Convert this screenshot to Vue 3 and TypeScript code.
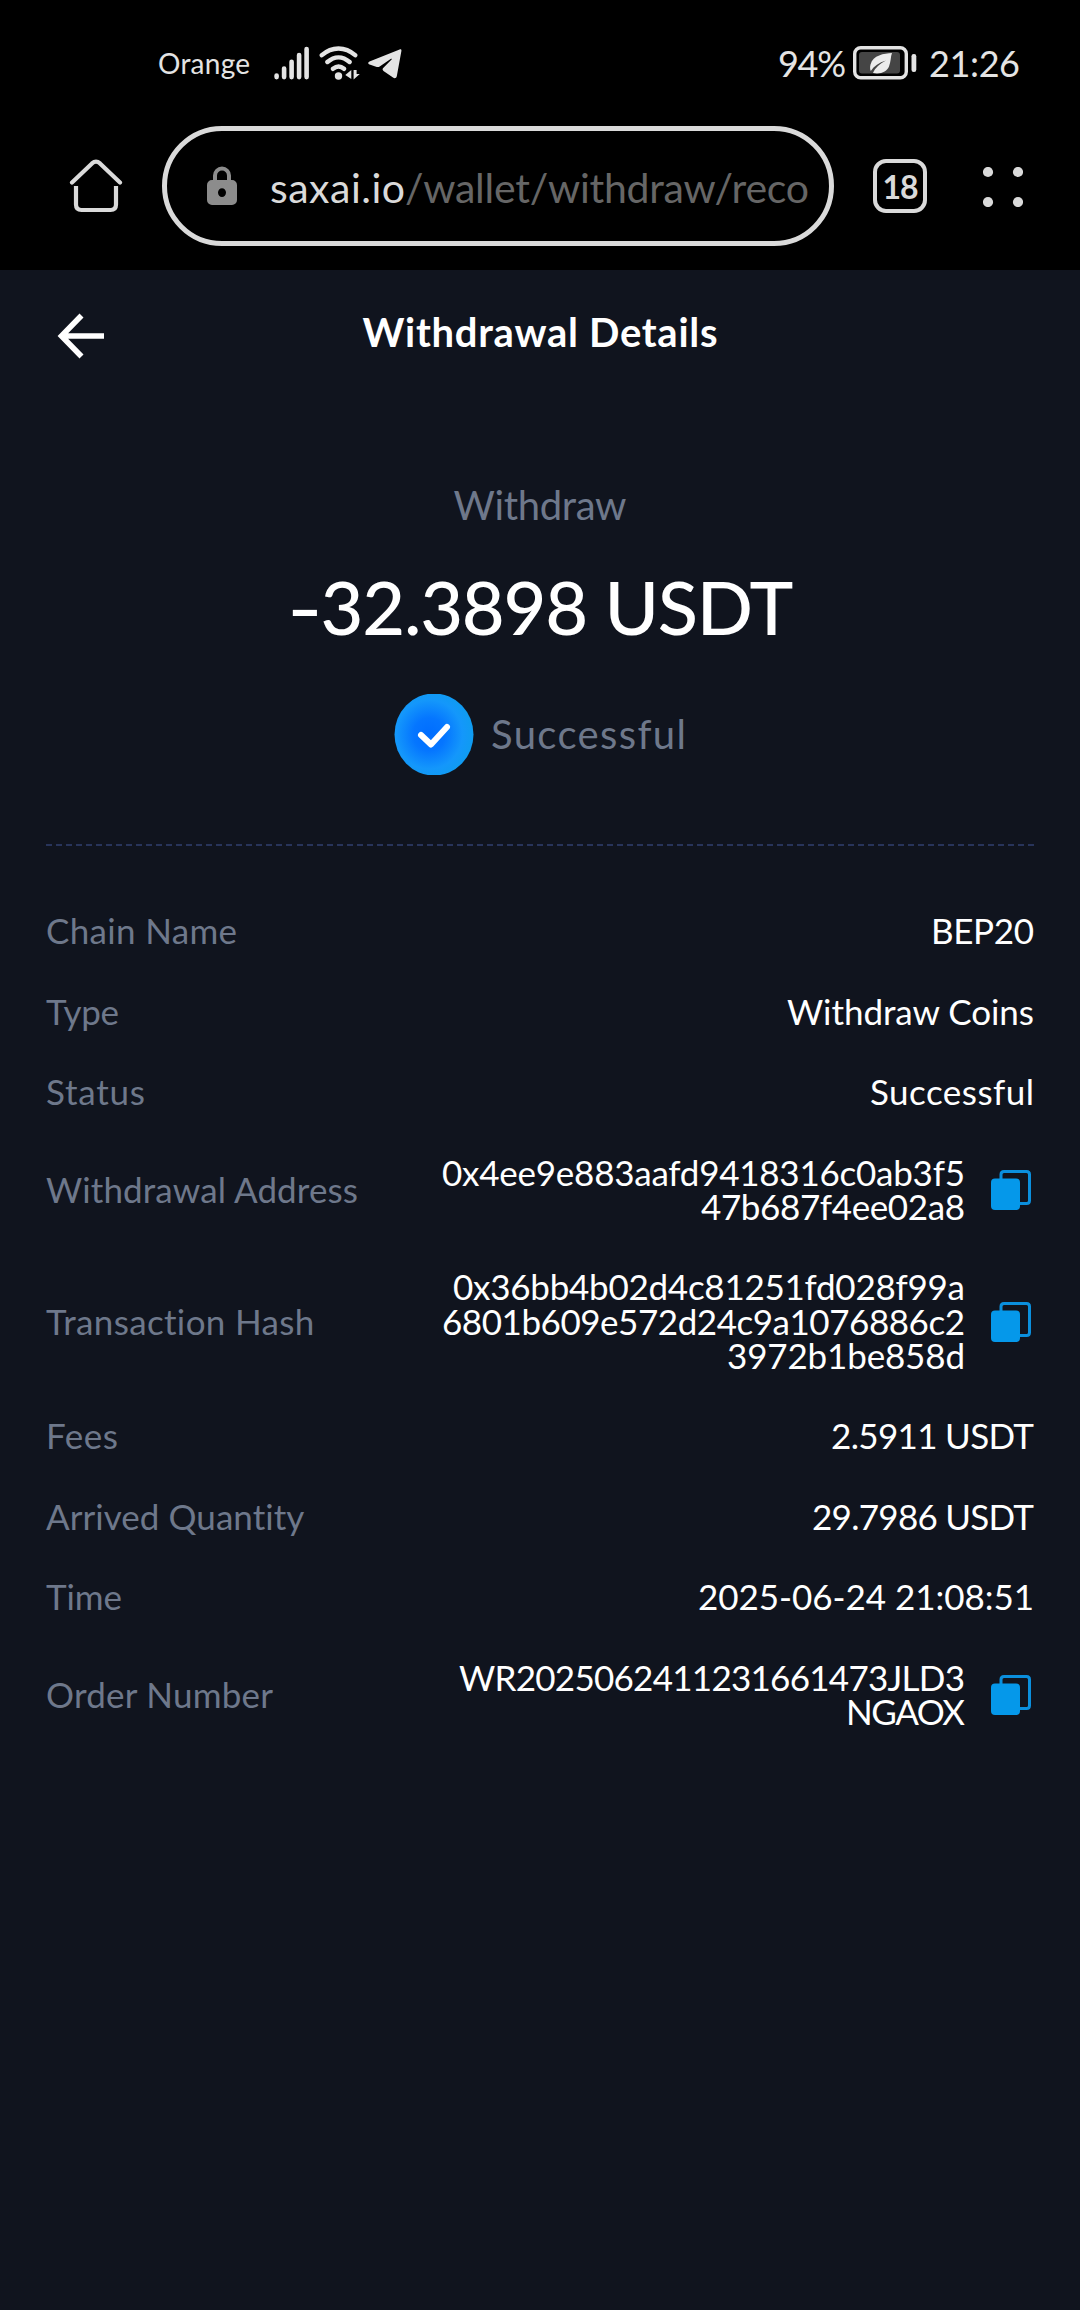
<script setup lang="ts">
interface DetailLine {
  text: string
  width: number
}

interface DetailRow {
  label: string
  labelWidth: number
  lines: DetailLine[]
  copyable?: boolean
}

const rows: DetailRow[] = [
  { label: 'Chain Name', labelWidth: 191, lines: [{ text: 'BEP20', width: 103 }] },
  { label: 'Type', labelWidth: 73, lines: [{ text: 'Withdraw Coins', width: 247 }] },
  { label: 'Status', labelWidth: 99, lines: [{ text: 'Successful', width: 164 }] },
  {
    label: 'Withdrawal Address',
    labelWidth: 312,
    lines: [
      { text: '0x4ee9e883aafd9418316c0ab3f5', width: 523 },
      { text: '47b687f4ee02a8', width: 264 },
    ],
    copyable: true,
  },
  {
    label: 'Transaction Hash',
    labelWidth: 269,
    lines: [
      { text: '0x36bb4b02d4c81251fd028f99a', width: 512 },
      { text: '6801b609e572d24c9a1076886c2', width: 523 },
      { text: '3972b1be858d', width: 238 },
    ],
    copyable: true,
  },
  { label: 'Fees', labelWidth: 72, lines: [{ text: '2.5911 USDT', width: 203 }] },
  { label: 'Arrived Quantity', labelWidth: 259, lines: [{ text: '29.7986 USDT', width: 222 }] },
  { label: 'Time', labelWidth: 76, lines: [{ text: '2025-06-24 21:08:51', width: 336 }] },
  {
    label: 'Order Number',
    labelWidth: 227,
    lines: [
      { text: 'WR2025062411231661473JLD3', width: 506 },
      { text: 'NGAOX', width: 119 },
    ],
    copyable: true,
  },
]

// Spreads the letters of a single-line text so that it takes the given width.
const vFit = {
  mounted(el: HTMLElement, binding: { value: number }) {
    const natural = el.getBoundingClientRect().width
    const count = (el.textContent ?? '').length
    const spacing = (binding.value - natural) / Math.max(1, count - 1)
    el.style.letterSpacing = `${spacing}px`
    el.style.marginRight = `${-spacing}px`
  },
}
</script>

<template>
  <div class="screen">
    <div class="chrome">
      <div class="status-bar">
        <span v-fit="92" class="carrier">Orange</span>
        <svg class="signal" width="36" height="34" viewBox="0 0 36 34" stroke="#e4e4e4" stroke-width="4.6" stroke-linecap="round">
          <path d="M2.6 29.5v1.6M10.1 22.6v8.5M17.6 15.8v15.3M25.1 9v22.1M32.6 3v28.1" />
        </svg>
        <svg class="wifi" width="43" height="34" viewBox="0 0 43 34" fill="none" stroke="#e4e4e4" stroke-width="4.4" stroke-linecap="round">
          <path d="M2.8 9.2C13 .2 26 .2 36.2 9.2M8.4 16C15.4 9.8 23.6 9.8 30.6 16M14 22.8c3.8-3 7.4-3 11 0" />
          <circle cx="19.5" cy="30" r="3.7" fill="#e4e4e4" stroke="none" />
          <path d="M32.3 24v9l-6-4zM34.6 24v9.5l6.2-5.5h-3.2V24z" fill="#e4e4e4" stroke="none" />
        </svg>
        <svg class="telegram" width="34" height="30" viewBox="0 0 34 30" fill="#e4e4e4">
          <path d="M31.6.4 1.5 12.5c-1.800.8-1.700 2.300.1 2.900l7.200 2.500c1 .3 2 .1 2.900-.5L23 9.800c.7-.4 1.100.1.6.6l-8.400 8.600c-1 1-.8 2.100.3 2.900l9.500 6.700c1.600 1 3.400.7 3.800-1.300L33.400 1.900c.2-1.300-.5-2-1.800-1.500z" />
        </svg>
        <span v-fit="68" class="clock percent">94%</span>
        <svg class="battery" width="64" height="34" viewBox="0 0 64 34">
          <rect x="1.700" y="1.700" width="51.600" height="30" rx="6" fill="none" stroke="#e4e4e4" stroke-width="3.400" />
          <rect x="6" y="6" width="41" height="21.500" rx="3" fill="#454545" />
          <path d="M39 7C31 7.500 20 9 17.500 18.500c-.7 2.800-.4 4.800.3 6.500C21 20 26 16.500 33 14.500 27 17.500 22 22 20 27c8 1.500 14-1.500 16-6.500C38 15.500 37.500 11 39 7z" fill="#ececec" />
          <rect x="58.500" y="8" width="4.800" height="18" rx="2.200" fill="#e4e4e4" />
        </svg>
        <span v-fit="91" class="clock">21:26</span>
      </div>

      <div class="toolbar">
        <svg class="home" width="54" height="54" viewBox="0 0 54 54" fill="none" stroke="#dadada" stroke-width="4.200" stroke-linecap="round" stroke-linejoin="round">
          <path d="M3 23.500 23 4.400q4-3.600 8 0L51 23.500" />
          <path d="M7 27v18.500q0 5.500 5.500 5.500h29q5.500 0 5.500-5.500V27" stroke-linecap="butt" />
        </svg>
        <div class="address-bar">
          <svg class="lock" width="30" height="40" viewBox="0 0 30 40">
            <path d="M8 16V9.500a7 7 0 0 1 14 0V16" fill="none" stroke="#8c8c8c" stroke-width="4" />
            <path fill="#8c8c8c" fill-rule="evenodd" d="M5 14h20a5 5 0 0 1 5 5v15a5 5 0 0 1-5 5H5a5 5 0 0 1-5-5V19a5 5 0 0 1 5-5zm10 8.200a4 4.400 0 1 0 0 8.800 4 4.400 0 0 0 0-8.800z" />
          </svg>
          <span v-fit="135" class="url host">saxai.io</span>
          <span v-fit="404" class="url path">/wallet/withdraw/reco</span>
        </div>
        <div class="tabs"><span>18</span></div>
        <svg class="menu" width="40" height="40" viewBox="0 0 40 40" fill="#dadada">
          <circle cx="5" cy="5" r="5.100" /><circle cx="35" cy="5" r="5.100" />
          <circle cx="5" cy="35" r="5.100" /><circle cx="35" cy="35" r="5.100" />
        </svg>
      </div>
    </div>

    <header class="header">
      <svg class="back" width="48" height="46" viewBox="0 0 48 46" fill="none" stroke="#fff" stroke-width="5.600">
        <path d="M24.500 2.500 4.500 23l20 20.500M5 23h42" />
      </svg>
      <h1><span v-fit="355">Withdrawal Details</span></h1>
    </header>

    <section class="summary">
      <p class="kind"><span v-fit="173">Withdraw</span></p>
      <p class="amount"><span class="minus">-</span><span v-fit="473">32.3898 USDT</span></p>
      <div class="result">
        <svg width="80" height="81" viewBox="0 0 80 81">
          <defs>
            <radialGradient id="badge" cx=".44" cy=".5" r=".56">
              <stop offset="0" stop-color="#006dff" />
              <stop offset=".36" stop-color="#0576ff" />
              <stop offset=".75" stop-color="#1497fb" />
              <stop offset="1" stop-color="#0f9cf0" />
            </radialGradient>
          </defs>
          <ellipse cx="40" cy="40.500" rx="39.500" ry="41" fill="url(#badge)" />
          <path d="M27 41 37 50.500 53 33" fill="none" stroke="#fff" stroke-width="6" stroke-linecap="round" stroke-linejoin="round" />
        </svg>
        <span v-fit="195">Successful</span>
      </div>
    </section>

    <div class="divider"></div>

    <dl class="details">
      <div v-for="row in rows" :key="row.label" class="row">
        <dt><span v-fit="row.labelWidth">{{ row.label }}</span></dt>
        <dd>
          <div class="value">
            <span v-for="line in row.lines" :key="line.text" v-fit="line.width">{{ line.text }}</span>
          </div>
          <svg v-if="row.copyable" class="copy" width="43" height="40" viewBox="0 0 43 40">
            <path d="M10 10V4.500q0-3 3-3h22.500q3 0 3 3v26q0 3-3 3H27" fill="none" stroke="#0b8fdd" stroke-width="3" />
            <rect x="0" y="8.500" width="29" height="31.500" rx="4" fill="#0598ea" />
          </svg>
        </dd>
      </div>
    </dl>
  </div>
</template>

<style>
body {
  margin: 0;
  background: #10141e;
}
</style>

<style scoped>
.screen {
  width: 1080px;
  min-height: 2310px;
  background: #10141e;
  color: #fff;
  font-family: Lato, "Noto Sans", sans-serif;
}

.screen span {
  display: inline-block;
  white-space: nowrap;
}

.chrome {
  box-sizing: border-box;
  height: 270px;
  background: #000;
}

.status-bar {
  display: flex;
  align-items: center;
  height: 125px;
  padding: 0 60px 0 158px;
  color: #e4e4e4;
}

.carrier {
  font-size: 28px;
}

.signal {
  margin-left: 24px;
}

.wifi {
  margin-left: 9px;
}

.telegram {
  margin: 2px 0 0 6px;
}

.clock {
  padding-top: 1px;
  font-size: 36px;
}

.percent {
  margin-left: auto;
}

.battery {
  margin: 0 12px 0 7px;
}

.toolbar {
  display: flex;
  align-items: center;
  height: 120px;
  margin-top: 1px;
  padding: 0 57px 0 69px;
}

.address-bar {
  box-sizing: border-box;
  display: flex;
  align-items: center;
  width: 672px;
  height: 120px;
  margin-left: 39px;
  padding-left: 40px;
  border: 5px solid #dadada;
  border-radius: 60px;
}

.lock {
  margin-right: 33px;
}

.url {
  padding-top: 3px;
  font-size: 41px;
}

.host {
  color: #dadada;
}

.path {
  color: #666;
}

.tabs {
  box-sizing: border-box;
  display: flex;
  align-items: center;
  justify-content: center;
  width: 54px;
  height: 54px;
  margin-left: 39px;
  border: 4.500px solid #dadada;
  border-radius: 13px;
  color: #dadada;
  font-size: 32px;
  font-weight: 700;
  letter-spacing: -1px;
}

.menu {
  margin: 2px 0 0 56px;
}

.header {
  display: grid;
  grid-template-columns: 1fr auto 1fr;
  align-items: center;
  height: 123px;
  padding: 0 56px;
}

.back {
  margin: 9px 0 0 1px;
}

h1,
p,
dl,
dd {
  margin: 0;
}

h1 {
  padding-top: 1px;
  font-size: 40px;
  font-weight: 700;
  line-height: 48px;
}

.summary {
  display: flex;
  flex-direction: column;
  align-items: center;
  padding-top: 88px;
}

.kind {
  color: #6e788b;
  font-size: 40px;
  line-height: 48px;
}

.amount {
  margin-top: 33px;
  font-size: 74px;
  font-weight: 500;
  line-height: 90px;
}

.minus {
  width: 34px;
  transform: scaleX(1.300);
  transform-origin: 0 50%;
}

.result {
  display: flex;
  align-items: center;
  gap: 17px;
  margin-top: 42px;
  color: #6e788b;
  font-size: 40px;
  line-height: 46px;
}

.result span {
  padding-bottom: 2px;
}

.divider {
  height: 2px;
  margin: 69px 46px 0;
  background: repeating-linear-gradient(90deg, #28345a 0 6px, transparent 6px 10.020px);
}

.details {
  display: flex;
  flex-direction: column;
  gap: 46.400px;
  padding: 67.400px 46px 0;
  font-size: 35px;
  line-height: 34.100px;
}

.row {
  display: flex;
  align-items: center;
  justify-content: space-between;
}

dt {
  color: #6e788b;
}

dd {
  display: flex;
  align-items: center;
}

.value {
  display: flex;
  flex-direction: column;
  align-items: flex-end;
}

.copy {
  margin: 2px 0 0 26px;
}
</style>
